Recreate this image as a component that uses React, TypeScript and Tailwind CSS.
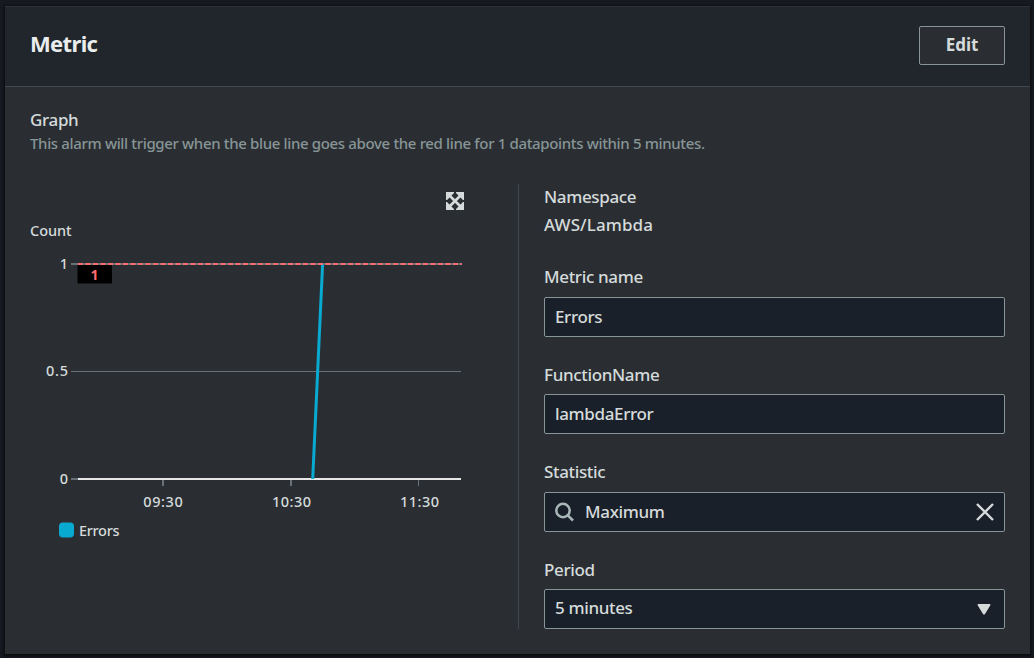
import type { ReactNode } from "react";

function Field({ label, children }: { label: string; children: ReactNode }) {
  return (
    <div className="flex h-[97.5px] flex-col">
      <div className="h-[30.6px] text-[17px] leading-[22px] tracking-[-0.35px]">{label}</div>
      <div className="flex h-10 items-center rounded-[2px] border border-[#879596] bg-[#1a2029] px-[10px] text-[17px] leading-[22px] tracking-[-0.35px]">
        {children}
      </div>
    </div>
  );
}

function ExpandIcon() {
  return (
    <svg className="block h-[18px] w-[18px]" viewBox="0 0 18 18" fill="#d5dbdb">
      <path d="M0 0H8V1L1 8H0zM18 0V8H17L10 1V0zM0 18V10H1L8 17V18zM18 18H10V17L17 10H18z" />
      <path d="M2 2L16 16M16 2L2 16" stroke="#d5dbdb" strokeWidth="2.600" />
    </svg>
  );
}

function Chart() {
  return (
    <svg
      className="block h-[340px] w-[465px]"
      viewBox="30 214 465 340"
      fontFamily='"Noto Sans", sans-serif'
      fontSize="14.5"
      fontWeight="500"
      fill="#d5dbdb"
    >
      <text x="30" y="236" textLength="41.500">Count</text>
      <text x="68" y="269" textAnchor="end">1</text>
      <text x="68" y="376" textAnchor="end" textLength="22">0.5</text>
      <text x="68" y="484" textAnchor="end">0</text>
      <g fill="#687078">
        <rect x="71" y="263" width="390" height="2" />
        <rect x="71" y="371" width="390" height="1" />
        <rect x="71" y="478" width="7" height="2" />
        <rect x="162" y="480" width="2" height="6" />
        <rect x="290" y="480" width="2" height="6" />
        <rect x="418" y="480" width="1" height="6" />
      </g>
      <rect x="78" y="478" width="383" height="2" fill="#e6e6e6" />
      <path d="M312.700 479L322.600 264" stroke="#08aad2" strokeWidth="3" />
      <path d="M78 264H462" stroke="#ff6e6e" strokeWidth="2" strokeDasharray="5 2.5" />
      <rect x="77.500" y="265" width="34.500" height="18.500" fill="#000" />
      <text x="94.500" y="280" textAnchor="middle" fontSize="14" fontWeight="700" fill="#ff6e6e">1</text>
      <text x="163" y="507" textAnchor="middle" textLength="39.500">09:30</text>
      <text x="291.500" y="507" textAnchor="middle" textLength="39">10:30</text>
      <text x="419.500" y="507" textAnchor="middle" textLength="39">11:30</text>
      <rect x="59" y="522.500" width="15" height="15" rx="4" fill="#08aad2" />
      <text x="79" y="536" textLength="40.500">Errors</text>
    </svg>
  );
}

export default function App() {
  return (
    <main className='h-[658px] w-[1034px] overflow-hidden bg-[#16191f] pt-1.5 pr-1 pb-1 pl-[5px] font-["Noto_Sans",sans-serif] font-medium text-[#d5dbdb]'>
      <section className="flex h-[648px] flex-col border-t border-[#2f3337] bg-[#2a2e33] shadow-[0_1px_2px_1px_#0b0c0e]">
        <header className="flex h-20 shrink-0 items-start justify-between border-b border-[#414750] bg-[#21252c] pt-[19px] pr-[25px] pl-[25px]">
          <h2 className="pt-[2px] text-[22px] leading-[30px] font-bold tracking-[-0.65px] text-[#eaeded]">Metric</h2>
          <button className="h-[39px] w-[86px] rounded-[2px] border border-[#879596] bg-[#2a2e33] pb-[2px] text-[17px] leading-[34px] font-bold">
            Edit
          </button>
        </header>
        <div className="shrink-0 px-[25px] pt-[22px]">
          <h3 className="text-[17px] leading-[22px] font-medium tracking-[-0.35px]">Graph</h3>
          <p className="mt-[2px] mb-[31px] text-[15px] leading-5 tracking-[-0.35px] whitespace-nowrap text-[#879596]">
            This alarm will trigger when the blue line goes above the red line for 1 datapoints within 5 minutes.
          </p>
          <div className="flex">
            <div className="h-[445px] w-[489px] border-r border-[#414750]">
              <div className="flex h-[30px] justify-end pt-2 pr-[54px]">
                <ExpandIcon />
              </div>
              <Chart />
            </div>
            <div className="ml-[25px] h-[445px] w-[461px] pt-[2px]">
              <div className="h-20 text-[17px] leading-[22px] tracking-[-0.35px]">
                <div>Namespace</div>
                <div className="mt-1.5 tracking-[0.1px]">AWS/Lambda</div>
              </div>
              <Field label="Metric name">Errors</Field>
              <Field label="FunctionName">lambdaError</Field>
              <Field label="Statistic">
                <svg className="mr-[10px] h-5 w-5" viewBox="0 0 20 20" fill="none" stroke="#aab7b8" strokeWidth="2.500">
                  <circle cx="8" cy="8.500" r="6.700" />
                  <path d="M12.800 13.300L18 18.500" />
                </svg>
                <span className="grow">Maximum</span>
                <svg className="h-[18px] w-[18px]" viewBox="0 0 18 18" fill="none" stroke="#d5dbdb" strokeWidth="2.400">
                  <path d="M1 1L17 17M17 1L1 17" />
                </svg>
              </Field>
              <Field label="Period">
                <span className="grow pb-[2px]">5 minutes</span>
                <svg className="mr-[3px] h-[11px] w-[14px]" viewBox="0 0 14 11" fill="#d5dbdb">
                  <path d="M1.200 0H12.800Q14 .300 13.200 1.500L8 10Q7 11 6 10L.800 1.500Q0 .300 1.200 0Z" />
                </svg>
              </Field>
            </div>
          </div>
        </div>
      </section>
    </main>
  );
}
